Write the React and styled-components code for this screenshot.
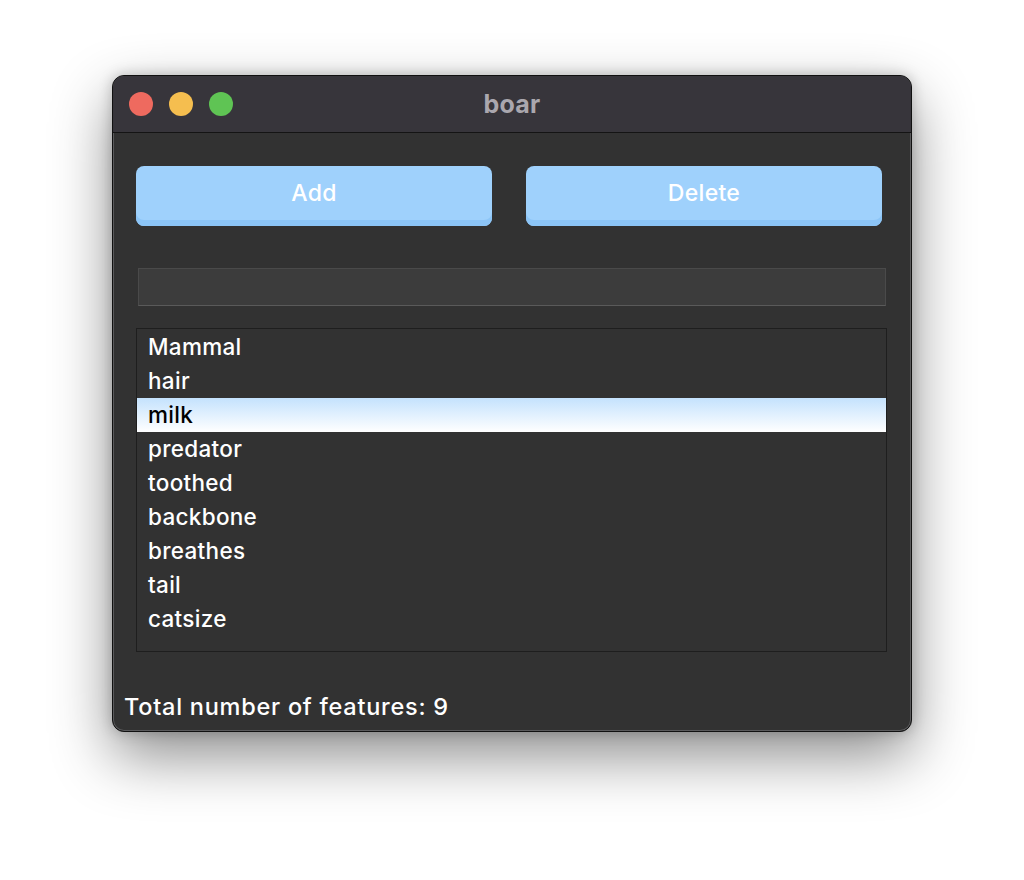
import React from "react";
import styled, { createGlobalStyle } from "styled-components";

const GlobalStyle = createGlobalStyle`
  html, body {
    margin: 0;
    padding: 0;
    background: #ffffff;
  }
  body {
    font-family: Inter, "Liberation Sans", Arial, sans-serif;
  }
`;

const Page = styled.div`
  width: 1024px;
  height: 880px;
  padding: 75px 0 0 112px;
  box-sizing: border-box;
`;

const Window = styled.div`
  width: 800px;
  height: 657px;
  box-sizing: border-box;
  border-radius: 12px;
  border: 1px solid #111;
  box-shadow: inset 0 0 0 1px #5a5a5c, 0 24px 60px rgba(0, 0, 0, 0.45), 0 0 14px rgba(0, 0, 0, 0.22);
  background: #323232;
  overflow: hidden;
  display: flex;
  flex-direction: column;
`;

const TitleBar = styled.div`
  position: relative;
  height: 56px;
  background: #37353b;
  border-bottom: 1px solid #141414;
  display: flex;
  align-items: center;
  padding-left: 16px;
  gap: 16px;
`;

const Light = styled.span`
  width: 24px;
  height: 24px;
  border-radius: 50%;
  background: ${(p) => p.$color};
`;

const Title = styled.div`
  position: absolute;
  inset: 0;
  display: flex;
  align-items: center;
  justify-content: center;
  font-weight: 700;
  font-size: 25px;
  letter-spacing: 0.3px;
  color: #aaa7ae;
  pointer-events: none;
`;

const Body = styled.div`
  flex: 1;
  display: flex;
  flex-direction: column;
  padding-top: 33px;
`;

const ButtonRow = styled.div`
  display: flex;
  gap: 34px;
  padding: 0 29px 0 23px;
`;

const Button = styled.button`
  flex: 1;
  height: 60px;
  border: none;
  border-radius: 8px;
  background: #9fd1fc;
  box-shadow: inset 0 -6px 0 #8cc5f7;
  color: #ffffff;
  font-family: Inter, "Liberation Sans", Arial, sans-serif;
  font-size: 23px;
  font-weight: 500;
  letter-spacing: 0.3px;
  padding: 0 0 6px 0;
`;

const Input = styled.div`
  margin: 42px 25px 0 25px;
  height: 36px;
  background: #3c3c3c;
  border: 1px solid #4a4a4a;
  border-bottom-color: #5a5a5a;
`;

const List = styled.div`
  margin: 22px 24px 0 23px;
  height: 324px;
  box-sizing: border-box;
  border: 1px solid #1e1e1e;
  padding-top: 1px;
`;

const Item = styled.div`
  height: 34px;
  line-height: 33px;
  padding-left: 11px;
  font-size: 22.5px;
  font-weight: 500;
  letter-spacing: 0.3px;
  color: ${(p) => (p.$selected ? "#000000" : "#ffffff")};
  background: ${(p) => (p.$selected ? "linear-gradient(#c4e2fd, #ffffff)" : "transparent")};
`;

const Footer = styled.div`
  margin-top: 40px;
  padding-left: 11px;
  font-size: 23.5px;
  font-weight: 500;
  letter-spacing: 0.75px;
  color: #ffffff;
`;

const features = ["Mammal", "hair", "milk", "predator", "toothed", "backbone", "breathes", "tail", "catsize"];

export default function App() {
  return (
    <>
      <GlobalStyle />
      <Page>
        <Window>
          <TitleBar>
            <Light $color="#ee6a5f" />
            <Light $color="#f5be4f" />
            <Light $color="#5fc454" />
            <Title>boar</Title>
          </TitleBar>
          <Body>
            <ButtonRow>
              <Button>Add</Button>
              <Button>Delete</Button>
            </ButtonRow>
            <Input />
            <List>
              {features.map((f) => (
                <Item key={f} $selected={f === "milk"}>{f}</Item>
              ))}
            </List>
            <Footer>Total number of features: {features.length}</Footer>
          </Body>
        </Window>
      </Page>
    </>
  );
}
